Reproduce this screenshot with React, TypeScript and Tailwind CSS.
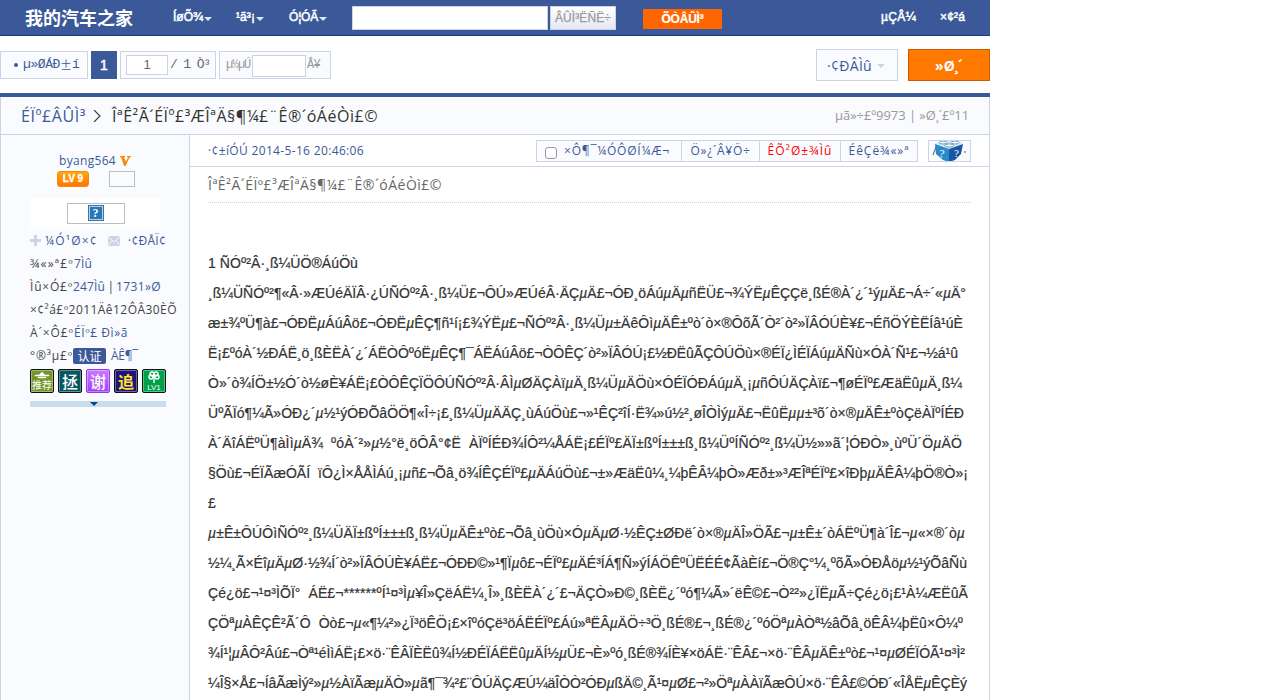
import { Fragment, useLayoutEffect, useRef, type ReactNode } from "react";

function Fit({ text, width, slant = false, className = "" }: { text: string; width: number; slant?: boolean; className?: string }) {
  const ref = useRef<HTMLSpanElement>(null);
  useLayoutEffect(() => {
    const el = ref.current;
    if (!el) return;
    el.style.letterSpacing = "0px";
    const natural = el.getBoundingClientRect().width;
    el.style.letterSpacing = `${(width - natural) / text.length}px`;
  }, [text, width]);
  const parts = text.split("µ");
  return (
    <span ref={ref} className={`inline-block whitespace-pre ${className}`}>
      {slant ? parts.map((p, i) => <Fragment key={i}>{i > 0 && <i>µ</i>}{p}</Fragment>) : text}
    </span>
  );
}

const lines: [string, number][] = [
  ["1 ÑÓº²Â·¸ß¼ÜÖ®ÁúÖù", 150],
  ["¸ß¼ÜÑÓº²¶«Â·»ÆÚéÄÏÂ·¿ÚÑÓº²Â·¸ß¼Ü£¬ÔÚ»ÆÚéÂ·ÄÇµÄ£¬ÓÐ¸öÁúµÄµñËÜ£¬¾ÝËµÊÇÇë¸ßÉ®À´¿´¹ýµÄ£¬Á÷´«µÄ°", 758],
  ["æ±¾ºÜ¶à£¬ÓÐËµÁúÂö£¬ÓÐËµÊÇ¶ñ¹í¡£¾ÝËµ£¬ÑÓº²Â·¸ß¼Üµ±ÄêÔìµÄÊ±ºò´ò×®ÔõÃ´Ò²´ò²»ÏÂÓÚÈ¥£¬ÉñÖÝÈËÍâ¹úÈ", 755],
  ["Ë¡£ºóÀ´½ÐÁË¸ö¸ßÈËÀ´¿´ÁËÒÔºóËµÊÇ¶¯ÁËÁúÂö£¬ÒÔÊÇ´ò²»ÏÂÓÚ¡£½ÐËûÃÇÔÚÖù×®ÉÏ¿ÌÉÏÁúµÄÑù×ÓÀ´Ñ¹£¬½á¹û", 750],
  ["Ò»´ò¾ÍÖ±½Ó´ò½øÈ¥ÁË¡£ÒÔÊÇÏÖÔÚÑÓº²Â·ÂÌµØÄÇÀïµÄ¸ß¼ÜµÄÖù×ÓÉÏÓÐÁúµÄ¸¡µñÔÚÄÇÀï£¬¶øÉÏº£ÆäËûµÄ¸ß¼", 754],
  ["ÜºÃÏó¶¼Ã»ÓÐ¿´µ½¹ýÓÐÕâÖÖ¶«Î÷¡£¸ß¼ÜµÄÄÇ¸ùÁúÖù£¬»¹ÊÇ²îÍ·Ë¾»ú½²¸øÎÒÌýµÄ£¬ËûËµµ±³õ´ò×®µÄÊ±ºòÇëÀÏºÍÉÐ", 756],
  ["À´ÄîÁËºÜ¶àÌìµÄ¾  ºóÀ´²»µ½°ë¸öÔÂ°¢Ë  ÀÏºÍÉÐ¾ÍÔ²¼ÅÁË¡£ÉÏº£ÄÏ±ßºÍ±±±ß¸ß¼ÜºÍÑÓº²¸ß¼Ü½»»ã´¦ÓÐÒ»¸ùºÜ´ÖµÄÖ", 754],
  ["§Öù£¬ÉÏÃæÓÃÍ  ïÔ¿Ì×ÅÅÌÁú¸¡µñ£¬Õâ¸ö¾ÍÊÇÉÏº£µÄÁúÖù£¬±»ÆäËû¼¸¼þÊÂ¼þÒ»Æð±»³ÆÎªÉÏº£×îÐþµÄÊÂ¼þÖ®Ò»¡", 760],
  ["£", 8],
  ["µ±Ê±ÔÚÔìÑÓº²¸ß¼ÜÄÏ±ßºÍ±±±ß¸ß¼ÜµÄÊ±ºò£¬Õâ¸ùÖù×ÓµÄµØ·½ÊÇ±ØÐë´ò×®µÄÎ»ÖÃ£¬µ±Ê±´òÁËºÜ¶à´Î£¬µ«×®´òµ", 757],
  ["½¼¸Ã×ÉîµÄµØ·½¾Í´ò²»ÏÂÓÚÈ¥ÁË£¬ÓÐÐ©»¹¶Ïµô£¬ÉÏº£µÄÉ³ÍÁ¶Ñ»ýÍÁÖÊºÜËÉÉ¢ÃàÈí£¬Ö®Ç°¼¸ºõÃ»ÓÐÅöµ½¹ýÕâÑù", 759],
  ["Çé¿ö£¬¹¤³ÌÕÏ°  ÁË£¬******ºÍ¹¤³Ìµ¥Î»ÇëÁË¼¸Î»¸ßÈËÀ´¿´£¬ÄÇÒ»Ð©¸ßÈË¿´ºó¶¼Ã»´ëÊ©£¬Ò²²»¿ÏËµÃ÷Çé¿ö¡£¹À¼ÆËûÃ", 760],
  ["ÇÖªµÀÊÇÊ²Ã´Ô  Òò£¬µ«¶¼²»¿Ï³öÊÖ¡£×îºóÇë³öÁËÉÏº£Áú»ªËÂµÄÖ÷³Ö¸ßÉ®£¬¸ßÉ®¿´ºóÖªµÀÒª½âÕâ¸öÊÂ¼þËû×Ô¼º", 755],
  ["¾Í¹¦µÂÔ²Âú£¬Òª¹éÌìÁË¡£×ö·¨ÊÂÏÈËû¾Í½ÐÉÏÁËËûµÄÍ½µÜ£¬È»ºó¸ßÉ®¾ÍÈ¥×öÁË·¨ÊÂ£¬×ö·¨ÊÂµÄÊ±ºò£¬¹¤µØÉÏÓÃ¹¤³Ì²", 757],
  ["¼Î§×Å£¬ÍâÃæÌý²»µ½ÀïÃæµÄÒ»µã¶¯¾²£¨ÔÚÄÇÆÚ¼äÎÒÒ²ÓÐµßÄ©¸Ã¹¤µØ£¬²»ÖªµÀÀïÃæÔÚ×ö·¨ÊÂ£©ÓÐ´«ÎÅËµÊÇÈý", 759],
];

const title = "ÎªÊ²Ã´ÉÏº£³ÆÎªÄ§¶¼£¨Ê®´óÁéÒì£©";

function Down({ className }: { className: string }) {
  return <svg className={className} width="8" height="4" viewBox="0 0 8 4"><path d="M0 0h8L4 4z" fill="currentColor" /></svg>;
}

function NavItem({ text, width, className }: { text: string; width: number; className: string }) {
  return (
    <span className={`flex shrink-0 items-center gap-px ${className}`}>
      <Fit text={text} width={width} />
      <Down className="mt-[3px] text-[#c9f0ff]" />
    </span>
  );
}

function Header() {
  return (
    <header className="flex h-9 items-start border-b border-[#1c3a7c] bg-[#3b5998] font-['Liberation_Sans','Noto_Sans_CJK_SC',sans-serif] text-xs leading-[35px] text-white [-webkit-text-stroke:0.5px_white]">
      <h1 className="ml-[25px] w-[148px] font-['Noto_Sans_CJK_SC',sans-serif] text-[18px] font-bold leading-[35px] [-webkit-text-stroke:0px]">我的汽车之家</h1>
      <NavItem text="ÍøÕ¾" width={30} className="w-[63px]" />
      <NavItem text="¹ã³¡" width={19} className="w-[53px]" />
      <NavItem text="Ó¦ÓÃ" width={29} className="w-[63px]" />
      <div className="mt-1.5 flex gap-[2px]">
        <input aria-label="search" className="h-6 w-[196px] border border-[#ccd3e4] bg-white" />
        <button className="h-6 w-[66px] border border-[#ccd3e4] bg-gradient-to-b from-white to-[#e4e8f4] leading-[22px] text-[#999] [-webkit-text-stroke:0.25px_#999]"><Fit text="ÂÛÌ³ËÑË÷" width={56} /></button>
      </div>
      <button className="ml-[27px] mt-[9px] h-5 w-[79px] rounded-[1px] bg-[#f60] leading-[18px] [-webkit-text-stroke:0.2px_white]"><Fit text="ÕÒÂÛÌ³" width={42} className="font-bold" /></button>
      <div className="ml-auto flex">
        <span className="w-[59px]"><Fit text="µÇÂ¼" width={35} /></span>
        <span className="w-[50px]"><Fit text="×¢²á" width={25} /></span>
      </div>
    </header>
  );
}

function Pager() {
  return (
    <nav className="flex h-[57px] items-start">
      <div className="mt-[15px] flex font-['Liberation_Mono',monospace] text-[13px] leading-[26px]">
        <a className="flex h-[28px] w-[88px] items-center whitespace-pre border border-[#ccd3e4] bg-[#f9fbfe] pl-[13px] text-[#3b5998]"><span className="mr-[4px] h-1 w-1 rounded-full bg-[#3b5998]" /><Fit text="µ»ØÁÐ" width={37} className="ml-px" /><span className="font-['Noto_Sans_CJK_SC',sans-serif] text-[12px] leading-[24px]">±</span><Fit text="í" width={7} /></a>
        <span className="ml-[3px] h-[28px] w-[26px] bg-[#3b5998] text-center font-['Liberation_Sans',sans-serif] text-[14px] leading-[28px] text-white [-webkit-text-stroke:0.5px_white]">1</span>
        <span className="ml-[3px] flex h-[28px] w-[96px] items-center border border-[#ccd3e4] bg-[#f9fbfe] pl-[5px] text-[#666]">
          <span className="h-5 w-[42px] border border-[#ccd3e4] bg-white text-center font-['Liberation_Sans',sans-serif] leading-[18px]">1</span>
          <Fit text="/ 1 Ò³" width={40} className="ml-[2px]" />
        </span>
        <span className="ml-[3px] flex h-[28px] w-[112px] items-center border border-[#ccd3e4] bg-[#f9fbfe] pl-[6px] text-[12px] text-[#999]">
          <Fit text="µ½µÚ" width={24} />
          <span className="ml-[2px] mt-[2px] h-[22px] w-[54px] border border-[#ccd3e4] bg-white" />
          <Fit text="Â¥" width={13} className="ml-px" />
        </span>
      </div>
      <div className="ml-auto mt-[13px] flex gap-[10px] text-[14px]">
        <button className="flex h-8 w-[82px] items-center border border-[#ccd3e4] bg-[#f9fbfe] pl-[10px] text-[#3b5998]"><Fit text="·¢ÐÂÌû" width={45} /><Down className="ml-[5px] mt-[2px] text-[#ccd3e4]" /></button>
        <button className="h-8 w-[82px] border border-[#cc5c00] bg-[#ff7800] font-bold leading-[29px] text-white"><Fit text="»Ø¸´" width={28} /></button>
      </div>
    </nav>
  );
}

function Badge({ className, children }: { className: string; children: ReactNode }) {
  return <span className={`flex h-6 w-6 flex-col items-center justify-center overflow-hidden rounded-[2px] border font-['Noto_Sans_CJK_SC',sans-serif] shadow-[inset_0_0_0_1px_rgba(255,255,255,0.35)] ${className}`}>{children}</span>;
}

function Sidebar() {
  return (
    <aside className="w-[190px] shrink-0 border-x border-[#ccd3e4] bg-[#f9fbfe] pl-[29px] text-xs text-[#444]">
      <div className="mt-[16px] flex h-5 items-center pl-[29px] text-[#3b5998]">
        <Fit text="byang564" width={57} />
        <svg className="ml-[4px]" width="11" height="10" viewBox="0 0 11 10"><path d="M0 0h5v1l-1 .5 2 4 2-4L7 1V0h4v1L9.5 1.5 6.5 8 5.5 10H4L1.2 1.5 0 1z" fill="#f58a0b" /></svg>
      </div>
      <div className="flex h-[18px] items-start pl-[27px]">
        <span className="h-4 w-8 rounded-[3px] border border-[#f38b10] bg-gradient-to-b from-[#ffa60a] to-[#ff7600] text-center font-['Liberation_Sans',sans-serif] text-[10px] font-bold leading-[14px] text-white [-webkit-text-stroke:0.3px_white]">LV 9</span>
        <span className="ml-5 h-4 w-[26px] border border-[#bebebe]" />
      </div>
      <div className="mt-[9px] flex h-[30px] w-[130px] items-center justify-center bg-white pl-px">
        <span className="flex h-[21px] w-[58px] items-center justify-center border border-[#bebebe]">
          <span className="h-4 w-4 border border-[#3e73a8] bg-[#2878b8] text-center font-['Liberation_Serif',serif] text-[12px] font-bold leading-[14px] text-white shadow-[inset_0_0_0_1px_#b8d4e8]">?</span>
        </span>
      </div>
      <div className="mt-px flex h-[23px] items-center text-[#3b5998]">
        <svg width="11" height="11" viewBox="0 0 11 11"><path d="M4 0h3v4h4v3H7v4H4V7H0V4h4z" fill="#ccd3e4" /></svg>
        <Fit text="¼Ó¹Ø×¢" width={53} className="ml-[4px]" />
        <svg className="ml-[10px]" width="12" height="10" viewBox="0 0 12 10"><path d="M0 0h12v10H0z" fill="#ccd3e4" /><path d="M0 .5 6 6l6-5.500M0 9.500l4-5M12 9.500l-4-5" fill="none" stroke="#f9fbfe" /></svg>
        <Fit text="·¢ÐÅÏ¢" width={38} className="ml-[8px]" />
      </div>
      <div className="flex h-[23px] items-center"><Fit text="¾«»ª£º" width={44} /><Fit text="7Ìû" width={18} className="text-[#3b5998]" /></div>
      <div className="flex h-[23px] items-center"><Fit text="Ìû×Ó£º" width={43} /><Fit text="247Ìû" width={32} className="text-[#3b5998]" /><Fit text=" | " width={11} /><Fit text="1731»Ø" width={45} className="text-[#3b5998]" /></div>
      <div className="flex h-[23px] items-center"><Fit text="×¢²á£º2011Äê12ÔÂ30ÈÕ" width={147} /></div>
      <div className="flex h-[23px] items-center"><Fit text="À´×Ô£º" width={44} /><Fit text="ÉÏº£ Ðì»ã" width={54} className="text-[#3b5998]" /></div>
      <div className="flex h-[24px] items-center"><Fit text="°®³µ£º" width={43} /><span className="h-4 w-[33px] rounded-[2px] bg-[#3b5998] text-center font-['Noto_Sans_CJK_SC',sans-serif] text-[12px] leading-[15px] text-white">认证</span><Fit text="ÀÊ¶¯" width={27} className="ml-[5px] text-[#3b5998]" /></div>
      <div className="mt-px flex gap-1">
        <Badge className="border-[#111] bg-[#74952b] text-white">
          <svg width="18" height="8" viewBox="0 0 18 8"><path d="M2 4h4l2-2 1-1 1 1 2 2h4v1H2zM5 6h8v1H5z" fill="#fff" stroke="#fff" strokeWidth=".5" /></svg>
          <span className="text-[10px] leading-[12px]">推荐</span>
        </Badge>
        <Badge className="border-[#111] bg-[#075762] text-[16px] font-medium leading-[21px] text-white">拯</Badge>
        <Badge className="border-[#923cde] bg-gradient-to-b from-[#cc77ff] to-[#a33dfa] text-[16px] font-medium leading-[21px] text-white">谢</Badge>
        <Badge className="border-[#111] bg-[#22137b] text-[16px] font-bold leading-[21px] text-[#ffe528]">追</Badge>
        <Badge className="border-[#111] bg-[#00a14b] text-white">
          <svg width="14" height="12" viewBox="0 0 14 12"><g fill="none" stroke="#fff" strokeWidth="1.4"><circle cx="5" cy="3" r="2" /><circle cx="9" cy="3" r="2" /><circle cx="4" cy="6" r="2" /><circle cx="10" cy="6" r="2" /><path d="M7 4v8" /></g></svg>
          <span className="font-['Liberation_Sans',sans-serif] text-[8px] leading-[9px]">LV1</span>
        </Badge>
      </div>
      <div className="mt-2 flex h-[6px] w-[136px] items-center justify-center bg-[#cadbe9] pr-[8px]"><Down className="text-[#004996]" /></div>
    </aside>
  );
}

function Tool({ text, width, className }: { text: string; width: number; className: string }) {
  return <button className={`h-full border-r border-[#ccd3e4] ${className}`}><Fit text={text} width={width} /></button>;
}

function Post() {
  return (
    <article className="min-w-0 flex-1 overflow-hidden border-r border-[#ccd3e4]">
      <div className="flex h-8 items-center border-b border-[#ccd3e4] pl-[18px] pr-[18px] text-xs text-[#3b5998]">
        <Fit text="·¢±íÓÚ 2014-5-16 20:46:06" width={156} />
        <div className="ml-auto flex h-[22px] border border-r-0 border-[#ccd3e4] bg-[#f9fbfe] leading-[20px]">
          <label className="flex w-[145px] border-r border-[#ccd3e4] pl-[8px]">
            <input type="checkbox" className="mr-[7px] mt-[6px] h-3 w-3 appearance-none rounded-[3px] border border-[#999] bg-white" />
            <Fit text="×Ô¶¯¼ÓÔØÍ¼Æ¬" width={106} />
          </label>
          <Tool text="Ö»¿´Â¥Ö÷" width={60} className="w-[78px]" />
          <Tool text="ÊÕ²Ø±¾Ìû" width={65} className="w-[81px] text-[#f00]" />
          <Tool text="ÉêÇë¾«»ª" width={61} className="w-[77px]" />
        </div>
        <div className="ml-[10px] h-[22px] w-[43px] overflow-hidden border border-[#ccd3e4] bg-[#f9fbfe]">
          <svg width="41" height="20" viewBox="0 0 41 20">
            <path d="m4 14 3-8M35 11h2" stroke="#3b5998" />
            <path d="M5 3 13 0h15l6 2-13 7z" fill="#d5ecf7" />
            <path d="m6 3 14 5v13l-6-2-7-6z" fill="#298aca" />
            <path d="m20 8 14-5-2 10-6 6-6 2z" fill="#1957a5" />
            <g fill="#fff" stroke="#2371a9" strokeWidth=".7"><ellipse cx="14" cy="1.500" rx="4" ry="1.500" /><ellipse cx="26" cy="1.500" rx="4" ry="1.500" /><ellipse cx="20" cy="4.500" rx="4.500" ry="1.600" /></g>
            <text x="10" y="16" fill="#fff" fontSize="11" fontFamily="Liberation Serif" transform="rotate(8 10 16)">?</text>
            <text x="25" y="16" fill="#fff" fontSize="11" fontFamily="Liberation Serif">?</text>
          </svg>
        </div>
      </div>
      <div className="px-[18px]">
        <div className="h-9 border-b border-dotted border-[#ccd3e4] text-[14px] leading-[35px] text-[#666]"><Fit text={title} width={234} /></div>
        <div className="pt-[45px] font-['Liberation_Sans',sans-serif] text-[14px] leading-[30px] text-[#333] [-webkit-text-stroke:0.2px_#333]">
          {lines.map(([text, width], i) => <div key={i} className="h-[30px] whitespace-nowrap"><Fit text={text} width={width} slant /></div>)}
        </div>
      </div>
    </article>
  );
}

export default function App() {
  return (
    <main className="flex h-[700px] w-[990px] flex-col overflow-hidden bg-white font-['Open_Sans',sans-serif]">
      <Header />
      <Pager />
      <section className="flex min-h-0 flex-1 flex-col border-t-4 border-[#3b5998]">
        <div className="flex h-[38px] shrink-0 items-center border-x border-b border-[#ccd3e4] bg-[#f9fbfe] pl-[20px] pr-[20px]">
          <Fit text="ÉÏº£ÂÛÌ³" width={65} className="text-[16px] text-[#3b5998]" />
          <svg className="ml-[7px] mt-px" width="8" height="12" viewBox="0 0 8 12"><path d="m1 0 6 6-6 6" fill="none" stroke="#444" strokeWidth="1.2" /></svg>
          <Fit text={title} width={266} className="ml-[11px] text-[16px] text-[#333]" />
          <Fit text="µã»÷£º9973 | »Ø¸´£º11" width={134} className="ml-auto text-[13px] text-[#999]" />
        </div>
        <div className="flex min-h-0 flex-1">
          <Sidebar />
          <Post />
        </div>
      </section>
    </main>
  );
}
